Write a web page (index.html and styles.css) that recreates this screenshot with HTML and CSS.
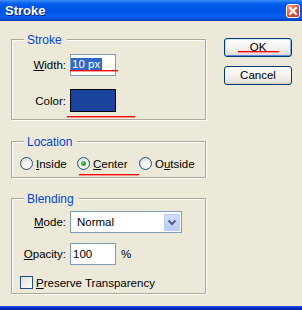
FILE: index.html
```html
<!DOCTYPE html>
<html lang="en">
<head>
	<meta charset="UTF-8">
	<title>Stroke</title>
<link rel="stylesheet" href="styles.css">
</head>
<body>
	<div class="window">
		<div class="titlebar">
			<span class="title">Stroke</span>
			<span class="close">
				<svg width="14" height="14" viewBox="0 0 14 14">
					<defs>
						<radialGradient id="cg" cx="0.3" cy="0.25" r="0.9">
							<stop offset="0" stop-color="#f49a7e"/>
							<stop offset="0.55" stop-color="#e0583a"/>
							<stop offset="1" stop-color="#b8341a"/>
						</radialGradient>
					</defs>
					<rect x="0.5" y="0.5" width="13" height="13" rx="2.5" fill="url(#cg)" stroke="#fff"/>
					<path d="M4 4 L10 10 M10 4 L4 10" stroke="#fff" stroke-width="2" stroke-linecap="square"/>
				</svg>
			</span>
		</div>
		<div class="client">
			<div class="groups">
				<div class="group stroke">
					<span class="legend">Stroke</span>
					<div class="row">
						<span class="lbl"><u>W</u>idth:</span>
						<div class="field"><span class="sel">10 px</span></div>
					</div>
					<div class="row gap13">
						<span class="lbl">Color:</span>
						<div class="swatch"></div>
					</div>
					<span class="mark mark-width"></span>
					<span class="mark mark-color"></span>
				</div>

				<div class="group location">
					<span class="legend">Location</span>
					<div class="radios">
						<div class="opt opt1"><span class="radio"></span><span class="txt"><u>I</u>nside</span></div>
						<div class="opt opt2"><span class="radio on"></span><span class="txt"><u>C</u>enter</span></div>
						<div class="opt"><span class="radio"></span><span class="txt">O<u>u</u>tside</span></div>
					</div>
					<span class="mark mark-center"></span>
				</div>

				<div class="group blending">
					<span class="legend">Blending</span>
					<div class="row">
						<span class="lbl"><u>M</u>ode:</span>
						<div class="select">
							<span class="val">Normal</span>
							<span class="drop">
								<svg width="16" height="17" viewBox="0 0 16 17">
									<path d="M4.5 6.5 L8 10 L11.5 6.5" fill="none" stroke="#4d6185" stroke-width="2"/>
								</svg>
							</span>
						</div>
					</div>
					<div class="row gap10">
						<span class="lbl"><u>O</u>pacity:</span>
						<div class="field num">100</div>
						<span class="pct">%</span>
					</div>
					<div class="check-row">
						<span class="check"></span>
						<span class="txt"><u>P</u>reserve Transparency</span>
					</div>
				</div>
			</div>

			<div class="buttons">
				<div class="btn default">OK<span class="mark mark-ok"></span></div>
				<div class="btn">Cancel</div>
			</div>
		</div>
		<div class="bottom"></div>
	</div>
</body>
</html>
```

FILE: styles.css
```css
body,div,span{padding: 0;margin: 0;}
body{
	font-family: "Liberation Sans", Arial, sans-serif;
	font-size: 11.5px;
	color: #000;
}
u{text-decoration: underline; text-underline-offset: 1px;}

.window{
	width: 302px;
	height: 310px;
	background: #ECE9D8;
	display: flex;
	flex-direction: column;
	overflow: hidden;
}
.titlebar{
	height: 21px;
	flex: none;
	display: flex;
	align-items: center;
	justify-content: space-between;
	background: linear-gradient(to bottom, #3a8cf5 0%, #2a7ef8 6%, #0a64ee 14%, #0058e6 30%, #0056e6 60%, #0a5ff0 75%, #0556e2 88%, #0046c6 95%, #003aa8 100%);
}
.title{
	padding-left: 5px;
	color: #fff;
	font-size: 13px;
	font-weight: bold;
	line-height: 21px;
	text-shadow: 1px 1px 0 #0a1f7a;
}
.close{
	width: 14px;
	height: 14px;
	margin-right: 2px;
	display: block;
}
.close svg{display: block;}

.client{
	flex: 1;
	display: flex;
	align-items: flex-start;
	padding: 17px 0 0 11px;
}
.bottom{
	height: 4px;
	flex: none;
	background: linear-gradient(to bottom, #2a5ee6, #0831d9 40%, #0020a8);
}

.groups{
	width: 195px;
	padding-top: 1px;
	display: flex;
	flex-direction: column;
}
.group{
	position: relative;
	box-sizing: border-box;
	border: 1px solid #aca899;
	box-shadow: 1px 1px 0 #fff, inset 1px 1px 0 #fff;
}
.stroke{height: 81px; padding-top: 14px;}
.location{height: 37px; margin-top: 21px; padding-top: 15px;}
.blending{height: 96px; margin-top: 20px; padding-top: 12px;}

.legend{
	position: absolute;
	top: -7px;
	left: 12px;
	padding: 0 5px 0 3px;
	background: #ECE9D8;
	color: #0046d5;
	font-size: 12px;
	line-height: 14px;
}

.row{
	display: flex;
	align-items: center;
}
.gap13{margin-top: 13px;}
.gap10{margin-top: 10px;}
.lbl{
	width: 54px;
	margin-right: 4px;
	text-align: right;
	white-space: nowrap;
}
.field{
	box-sizing: border-box;
	width: 46px;
	height: 22px;
	border: 1px solid #7f9db9;
	background: #fff;
	padding: 3px 0 0 0;
	line-height: 12px;
}
.sel{
	display: inline-block;
	height: 12px;
	padding: 0 2px 0 1px;
	background: #316ac5;
	color: #fff;
}
.num{padding-left: 2px; padding-top: 4px;}
.pct{margin-left: 5px;}
.swatch{
	box-sizing: border-box;
	width: 46px;
	height: 23px;
	border: 1px solid #000;
	background: #1b449e;
}

.select{
	box-sizing: border-box;
	width: 112px;
	height: 22px;
	border: 1px solid #7f9db9;
	background: #fff;
	display: flex;
	align-items: center;
	justify-content: space-between;
}
.val{padding-left: 6px;}
.drop{
	width: 16px;
	height: 17px;
	margin-right: 1px;
	border-radius: 2px;
	background: linear-gradient(to bottom, #d3defb, #b6c9f5);
	box-shadow: inset 0 0 0 1px #bccdf4;
}
.drop svg{display: block;}

.radios{
	display: flex;
	align-items: center;
	padding-left: 8px;
	height: 13px;
}
.opt{
	display: flex;
	align-items: center;
}
.opt1{width: 57px;}
.opt2{width: 62px;}
.radio{
	box-sizing: border-box;
	width: 13px;
	height: 13px;
	border: 1px solid #1c5180;
	border-radius: 50%;
	background: radial-gradient(circle at 65% 70%, #fff 0%, #f4f3ee 40%, #d6d3c7 100%);
	display: flex;
	align-items: center;
	justify-content: center;
}
.radio.on::after{
	content: "";
	width: 5px;
	height: 5px;
	border-radius: 50%;
	background: radial-gradient(circle at 35% 35%, #6fd66f, #21a121 60%, #137a13);
}
.txt{margin-left: 3px; white-space: nowrap;}

.check-row{
	display: flex;
	align-items: center;
	margin-top: 11px;
	padding-left: 8px;
}
.check{
	box-sizing: border-box;
	width: 13px;
	height: 13px;
	border: 1px solid #1c5180;
	background: linear-gradient(135deg, #dcdcd7, #fff);
}

.buttons{
	margin-left: 18px;
	display: flex;
	flex-direction: column;
	gap: 9px;
}
.btn{
	position: relative;
	box-sizing: border-box;
	width: 68px;
	height: 19px;
	line-height: 17px;
	text-align: center;
	border: 1px solid #003c74;
	border-radius: 3px;
	background: linear-gradient(to bottom, #ffffff, #f3f2ee 50%, #e8e6dd 85%, #d6d0c5);
}
.btn.default{
	box-shadow: inset 0 1px 0 #cee7ff, inset 1px 0 0 #bcd4f6, inset -1px 0 0 #89ade4, inset 0 -1px 0 #6982ee;
}

.mark{
	position: absolute;
	height: 1px;
	background: #f00;
	box-shadow: 0 1px 0 rgba(255,40,40,0.45);
}
.mark-width{left: 58px; top: 30px; width: 48px;}
.mark-color{left: 55px; top: 76px; width: 68px;}
.mark-center{left: 67px; top: 32px; width: 60px;}
.mark-ok{left: 13px; top: 12px; width: 41px;}
```
